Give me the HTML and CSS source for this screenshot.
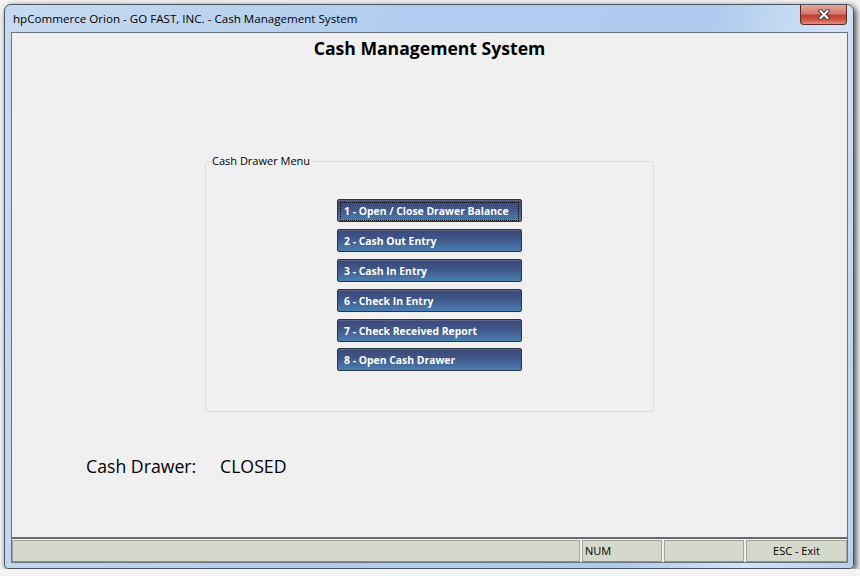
FILE: index.html
```html
<!DOCTYPE html>
<html>

<head>
  <link rel="stylesheet" href="styles.css">
  <title>Cash Management System</title>
</head>
<body>
  <div class="window">
    <div class="title-bar">
      <span class="title-text">hpCommerce Orion - GO FAST, INC. - Cash Management System</span>
      <div class="close-btn">
        <svg width="14" height="11" viewBox="0 0 14 11">
          <path d="M3.5 2 L10.5 9 M10.5 2 L3.5 9" stroke="#3b3f47" stroke-width="4" stroke-linecap="square" fill="none"/>
          <path d="M3.5 2 L10.5 9 M10.5 2 L3.5 9" stroke="#ffffff" stroke-width="2" stroke-linecap="square" fill="none"/>
        </svg>
      </div>
    </div>
    <div class="client">
      <div class="main">
        <h1 class="page-title">Cash Management System</h1>
        <fieldset class="menu-box">
          <legend>Cash Drawer Menu</legend>
          <div class="menu-buttons">
            <button class="menu-btn focused"><span>1 - Open / Close Drawer Balance</span></button>
            <button class="menu-btn"><span>2 - Cash Out Entry</span></button>
            <button class="menu-btn"><span>3 - Cash In Entry</span></button>
            <button class="menu-btn"><span>6 - Check In Entry</span></button>
            <button class="menu-btn"><span>7 - Check Received Report</span></button>
            <button class="menu-btn last"><span>8 - Open Cash Drawer</span></button>
          </div>
        </fieldset>
        <div class="drawer-status">
          <span class="drawer-label">Cash Drawer:</span>
          <span class="drawer-value">CLOSED</span>
        </div>
      </div>
      <div class="status-bar">
        <div class="panel panel-wide"></div>
        <div class="panel panel-num">NUM</div>
        <div class="panel panel-blank"></div>
        <div class="panel panel-exit">ESC - Exit</div>
      </div>
    </div>
  </div>
</body>

</html>
```

FILE: styles.css
```css
body {
  margin: 0;
  padding: 4px 0 0 4px;
  background-color: #f4f4f4;
  font-family: "Open Sans", "Noto Sans", sans-serif;
}

.window {
  box-sizing: border-box;
  width: 850px;
  height: 565px;
  display: flex;
  flex-direction: column;
  padding: 0 5px 5px 6px;
  border: 1px solid #4b5460;
  border-radius: 7px 7px 4px 4px;
  background: linear-gradient(100deg, #c6daf0 0%, #b2cdee 40%, #aecbee 75%, #d2e3f5 88%, #b6d0ee 100%);
  box-shadow: 2px 2px 6px rgba(0, 0, 0, 0.75);
}

.title-bar {
  height: 27px;
  display: flex;
  align-items: center;
  justify-content: space-between;
  padding-left: 2px;
}

.title-text {
  font-size: 11.6px;
  color: #000;
}

.close-btn {
  align-self: flex-start;
  box-sizing: border-box;
  width: 47px;
  height: 20px;
  margin-right: 1px;
  display: flex;
  align-items: center;
  justify-content: center;
  border: 1px solid #5e2a24;
  border-top: none;
  border-radius: 0 0 4px 4px;
  background: linear-gradient(to bottom, #e8a89b 0%, #d57a6b 45%, #c3402f 55%, #cf5a49 80%, #e09484 100%);
}

.client {
  flex: 1;
  display: flex;
  flex-direction: column;
  border: 1px solid #6a7582;
  background-color: #f0f0f0;
}

.main {
  flex: 1;
  border-bottom: 2px solid #6a6a6a;
}

.page-title {
  margin: 0;
  padding-top: 4px;
  font-size: 17.6px;
  line-height: 22px;
  font-weight: bold;
  text-align: center;
  color: #000;
}

.menu-box {
  box-sizing: border-box;
  width: 449px;
  margin: 95px auto 0;
  padding: 31px 0 40px;
  border: 1px solid #d3dde6;
  border-radius: 3px;
  min-inline-size: 0;
}

.menu-box legend {
  margin-left: 4px;
  padding: 0 2px;
  font-size: 11px;
  line-height: 14px;
  color: #000;
}

.menu-buttons {
  display: flex;
  flex-direction: column;
  align-items: center;
  gap: 7px;
}

.menu-btn {
  box-sizing: border-box;
  width: 185px;
  height: 23px;
  padding: 2px;
  border: 1px solid #2d3447;
  border-radius: 2px;
  background: linear-gradient(to bottom, #3c4878 0%, #3f5487 40%, #4870a3 80%, #4b80b2 100%);
  box-shadow: inset 0 1px 0 rgba(255, 255, 255, 0.15);
  font-family: "Open Sans", "Noto Sans", sans-serif;
  font-size: 10.4px;
  font-weight: bold;
  color: #fff;
  text-align: left;
  white-space: nowrap;
  cursor: pointer;
}

.menu-btn span {
  display: block;
  height: 17px;
  line-height: 17px;
  padding-left: 3px;
  border: 1px dotted transparent;
}

.menu-btn.focused span {
  border-color: #000;
}

.menu-btn.last {
  margin-top: -1px;
}

.drawer-status {
  display: flex;
  margin-top: 42px;
  padding-left: 74px;
  font-size: 17.7px;
  line-height: 24px;
  color: #000;
}

.drawer-label {
  width: 134px;
}

.status-bar {
  height: 23px;
  display: flex;
  gap: 2px;
  padding-top: 1px;
  box-sizing: border-box;
}

.panel {
  box-sizing: border-box;
  height: 22px;
  border: 1px solid #a3a59c;
  border-bottom-color: #8d8d8d;
  background-color: #d4d9cb;
  font-size: 11px;
  line-height: 20px;
  color: #000;
}

.panel-wide {
  flex: 1;
}

.panel-num {
  width: 80px;
  padding-left: 2px;
}

.panel-blank {
  width: 80px;
}

.panel-exit {
  width: 101px;
  text-align: center;
}
```
